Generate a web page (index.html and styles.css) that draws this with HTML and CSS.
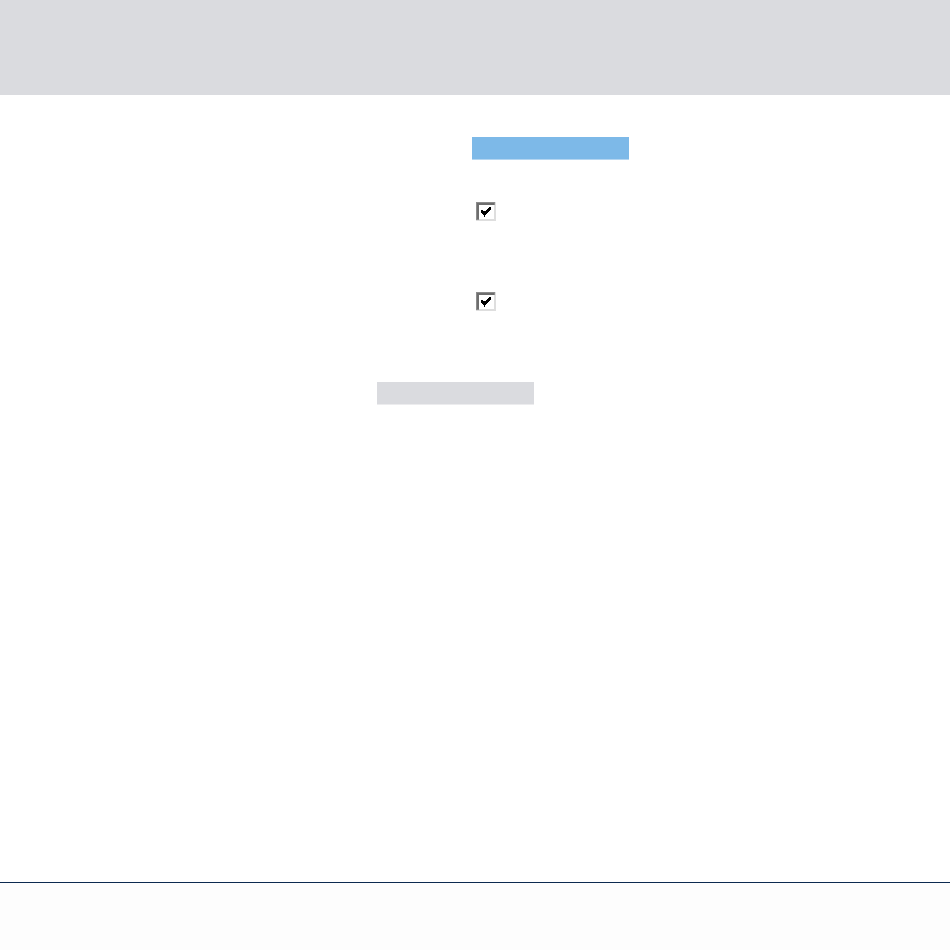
FILE: index.html
```html
<!DOCTYPE html>
<html>
<head>
    <meta charset="utf-8">
    <link rel="stylesheet" href="styles.css">
</head>
<body>
    <div class="topbar"></div>
    <div class="main">
        <div class="form">
            <div class="selected"></div>
            <div class="check">
                <svg width="20" height="19" viewBox="0 0 20 19" shape-rendering="crispEdges">
                    <rect x="0" y="0" width="20" height="19" fill="#dedede"/>
                    <rect x="0" y="0" width="19" height="3" fill="#8c8c8c"/>
                    <rect x="0" y="0" width="3" height="18" fill="#8c8c8c"/>
                    <rect x="1" y="1" width="17" height="2" fill="#6e6e6e"/>
                    <rect x="1" y="1" width="2" height="16" fill="#6e6e6e"/>
                    <rect x="3" y="3" width="15" height="14" fill="#ffffff"/>
                    <g fill="#000">
                        <rect x="5" y="8" width="1" height="3"/>
                        <rect x="6" y="8" width="1" height="4"/>
                        <rect x="7" y="9" width="1" height="4"/>
                        <rect x="8" y="9" width="1" height="6"/>
                        <rect x="9" y="9" width="1" height="4"/>
                        <rect x="10" y="8" width="1" height="4"/>
                        <rect x="11" y="7" width="1" height="4"/>
                        <rect x="12" y="6" width="1" height="4"/>
                        <rect x="13" y="5" width="1" height="4"/>
                        <rect x="14" y="5" width="1" height="3"/>
                    </g>
                </svg>
            </div>
            <div class="check">
                <svg width="20" height="19" viewBox="0 0 20 19" shape-rendering="crispEdges">
                    <rect x="0" y="0" width="20" height="19" fill="#dedede"/>
                    <rect x="0" y="0" width="19" height="3" fill="#8c8c8c"/>
                    <rect x="0" y="0" width="3" height="18" fill="#8c8c8c"/>
                    <rect x="1" y="1" width="17" height="2" fill="#6e6e6e"/>
                    <rect x="1" y="1" width="2" height="16" fill="#6e6e6e"/>
                    <rect x="3" y="3" width="15" height="14" fill="#ffffff"/>
                    <g fill="#000">
                        <rect x="5" y="8" width="1" height="3"/>
                        <rect x="6" y="8" width="1" height="4"/>
                        <rect x="7" y="9" width="1" height="4"/>
                        <rect x="8" y="9" width="1" height="6"/>
                        <rect x="9" y="9" width="1" height="4"/>
                        <rect x="10" y="8" width="1" height="4"/>
                        <rect x="11" y="7" width="1" height="4"/>
                        <rect x="12" y="6" width="1" height="4"/>
                        <rect x="13" y="5" width="1" height="4"/>
                        <rect x="14" y="5" width="1" height="3"/>
                    </g>
                </svg>
            </div>
            <div class="button-bar"></div>
        </div>
    </div>
    <div class="footer"></div>
</body>
</html>
```

FILE: styles.css
```css
body {
    margin: 0;
    font-family: "Liberation Sans", Arial, sans-serif;
    background-color: #ffffff;
}
.topbar {
    height: 95px;
    background-color: #dadbdf;
}
.main {
    height: 787px;
}
.form {
    display: flex;
    flex-direction: column;
    align-items: flex-start;
    margin-left: 377px;
    padding-top: 42px;
}
.selected {
    width: 157px;
    height: 22px;
    margin-left: 95px;
    background-color: #7db9e8;
    border-bottom: 1px solid #b5d6f1;
}
.check {
    margin-left: 99px;
    margin-top: 42px;
    height: 19px;
}
.check svg {
    display: block;
}
.check + .check {
    margin-top: 71px;
}
.button-bar {
    width: 157px;
    height: 22px;
    margin-top: 71px;
    background-color: #dadbdf;
    border-bottom: 1px solid #ececee;
}
.footer {
    border-top: 1px solid #0c2a50;
    height: 67px;
    background-color: #fdfdfd;
}
```
